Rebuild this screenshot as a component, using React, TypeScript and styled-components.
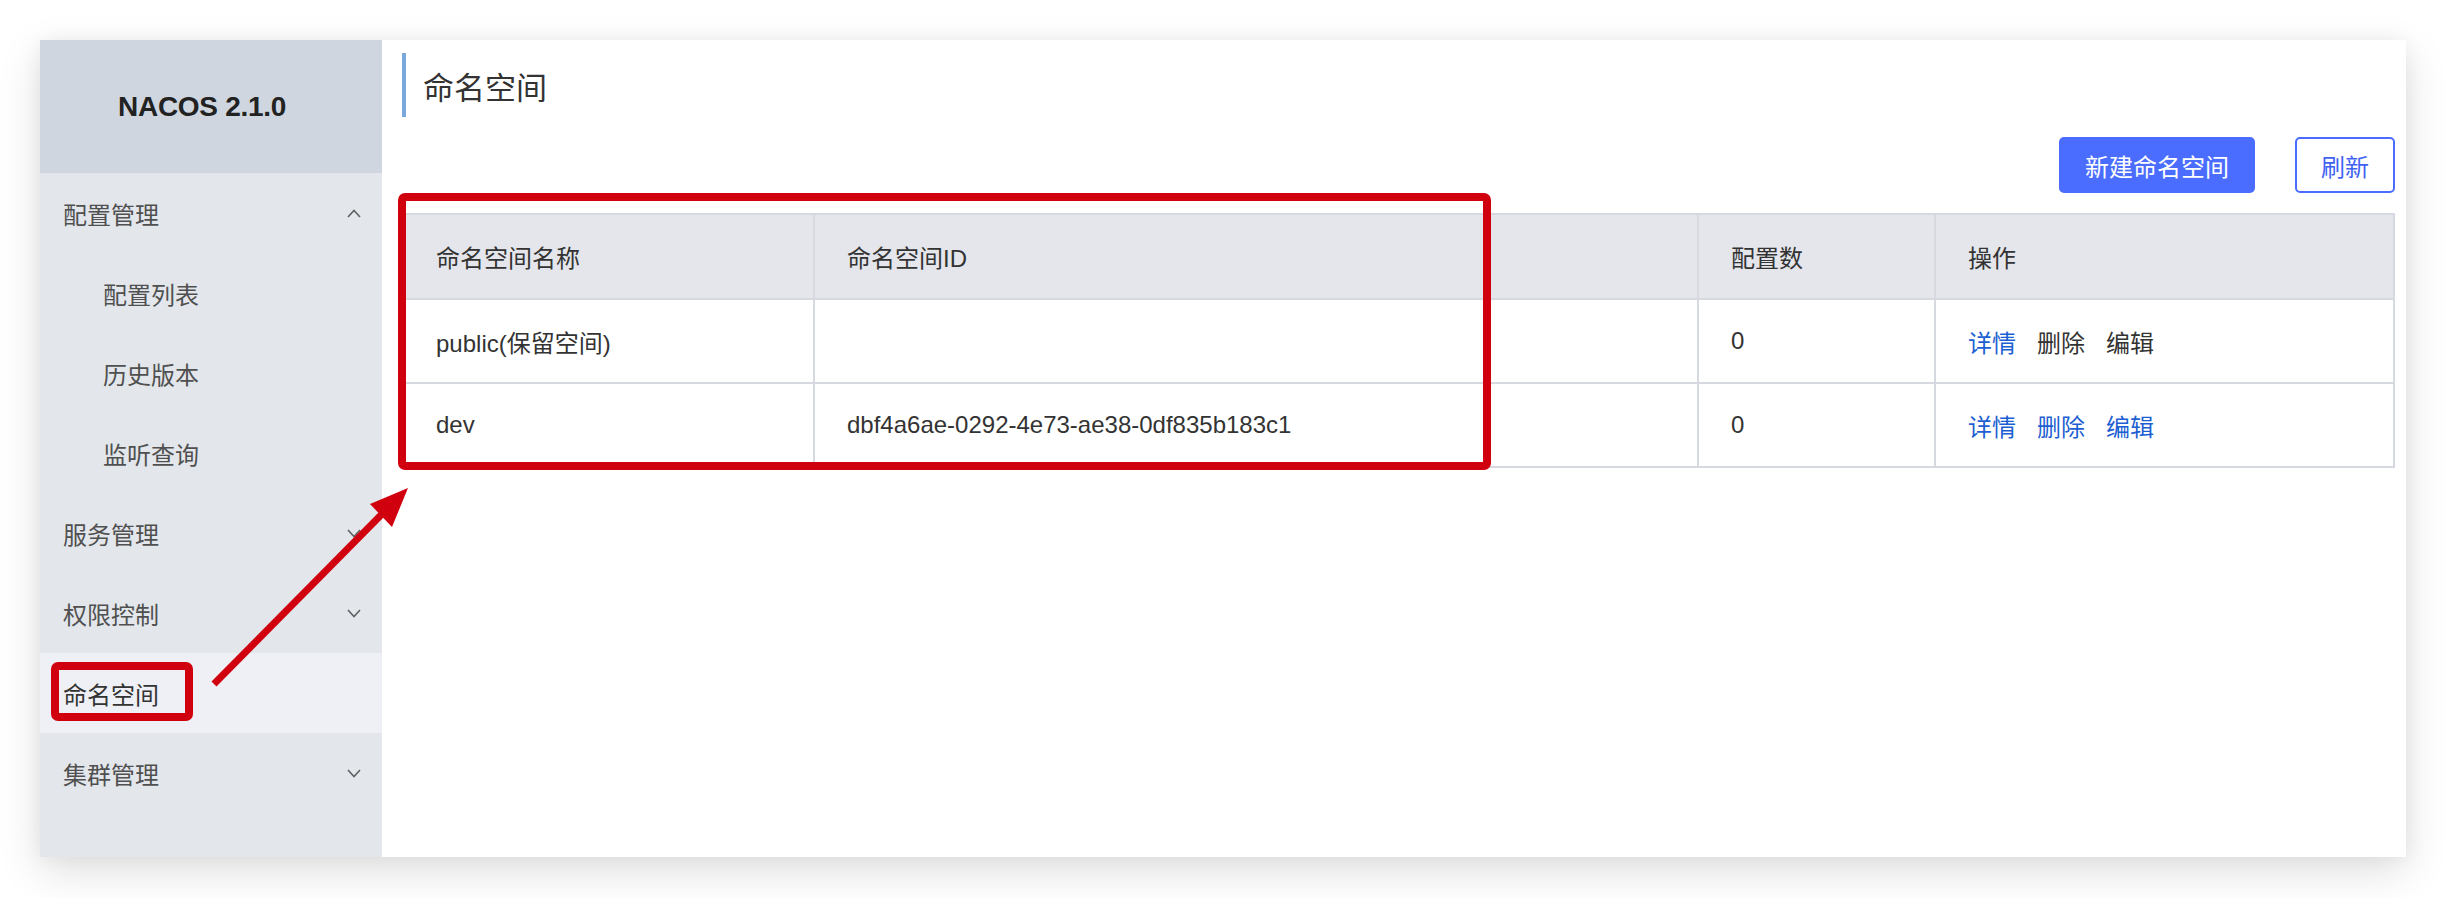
import styled, { createGlobalStyle } from "styled-components";

const GlobalStyle = createGlobalStyle`
  html, body {
    margin: 0;
    padding: 0;
    background: #ffffff;
  }
  body {
    font-family: "Liberation Sans", "Noto Sans CJK SC", sans-serif;
    color: #333;
  }
`;

interface MenuEntry {
  label: string;
  sub?: boolean;
  arrow?: "up" | "down";
  active?: boolean;
}

const menu: MenuEntry[] = [
  { label: "配置管理", arrow: "up" },
  { label: "配置列表", sub: true },
  { label: "历史版本", sub: true },
  { label: "监听查询", sub: true },
  { label: "服务管理", arrow: "down" },
  { label: "权限控制", arrow: "down" },
  { label: "命名空间", active: true },
  { label: "集群管理", arrow: "down" },
];

interface Row {
  name: string;
  id: string;
  count: number;
  locked: boolean;
}

const rows: Row[] = [
  { name: "public(保留空间)", id: "", count: 0, locked: true },
  { name: "dev", id: "dbf4a6ae-0292-4e73-ae38-0df835b183c1", count: 0, locked: false },
];

function Chevron({ dir }: { dir: "up" | "down" }) {
  const points = dir === "up" ? "1,8 7,1.5 13,8" : "1,1 7,7.5 13,1";
  return (
    <svg width="14" height="9" viewBox="0 0 14 9">
      <polyline points={points} fill="none" stroke="#606060" strokeWidth="1.6" />
    </svg>
  );
}

export default function App() {
  return (
    <>
      <GlobalStyle />
      <Page>
        <Window>
          <Sidebar>
            <Logo>NACOS 2.1.0</Logo>
            {menu.map((m, i) => (
              <MenuItem key={i} $sub={!!m.sub} $active={!!m.active}>
                <span>{m.label}</span>
                {m.arrow && <Chevron dir={m.arrow} />}
              </MenuItem>
            ))}
          </Sidebar>
          <Main>
            <Title>命名空间</Title>
            <Toolbar>
              <Button $primary>新建命名空间</Button>
              <Button>刷新</Button>
            </Toolbar>
            <Table>
              <colgroup>
                <col style={{ width: 411 }} />
                <col style={{ width: 884 }} />
                <col style={{ width: 237 }} />
                <col />
              </colgroup>
              <thead>
                <tr>
                  <th>命名空间名称</th>
                  <th>命名空间ID</th>
                  <th>配置数</th>
                  <th>操作</th>
                </tr>
              </thead>
              <tbody>
                {rows.map((r) => (
                  <tr key={r.name}>
                    <td>{r.name}</td>
                    <td>{r.id}</td>
                    <td>{r.count}</td>
                    <td>
                      <Actions>
                        <Action $enabled>详情</Action>
                        <Action $enabled={!r.locked}>删除</Action>
                        <Action $enabled={!r.locked}>编辑</Action>
                      </Actions>
                    </td>
                  </tr>
                ))}
              </tbody>
            </Table>
          </Main>
        </Window>
        <Annotations width="2446" height="898" viewBox="0 0 2446 898">
          <rect x="402" y="197" width="1085" height="269" rx="3" fill="none" stroke="#d1000e" strokeWidth="8" />
          <rect x="55" y="666" width="134" height="51" rx="3" fill="none" stroke="#d1000e" strokeWidth="8" />
          <line x1="214" y1="684" x2="384" y2="512" stroke="#d1000e" strokeWidth="7" />
          <polygon points="408,488 370,504 392,527" fill="#d1000e" />
        </Annotations>
      </Page>
    </>
  );
}

const Page = styled.div`
  position: relative;
  width: 2446px;
  height: 898px;
  padding: 40px 40px 0 40px;
  box-sizing: border-box;
  overflow: hidden;
`;

const Window = styled.div`
  display: flex;
  height: 817px;
  background: #fff;
  box-shadow: 0 14px 40px rgba(0, 0, 0, 0.13), 0 0 18px rgba(0, 0, 0, 0.05);
`;

const Sidebar = styled.div`
  width: 342px;
  flex-shrink: 0;
  background: #e3e7ec;
  display: flex;
  flex-direction: column;
`;

const Logo = styled.div`
  height: 133px;
  background: #cfd6df;
  display: flex;
  align-items: center;
  justify-content: center;
  padding-right: 18px;
  font-size: 28px;
  font-weight: bold;
  letter-spacing: -0.3px;
  color: #222;
`;

const MenuItem = styled.div<{ $sub: boolean; $active: boolean }>`
  height: 80px;
  display: flex;
  align-items: center;
  justify-content: space-between;
  padding-left: ${(p) => (p.$sub ? "63px" : "23px")};
  padding-right: 21px;
  font-size: 24px;
  color: ${(p) => (p.$active ? "#333" : "#505050")};
  background: ${(p) => (p.$active ? "#eef0f5" : "transparent")};

  svg {
    display: block;
  }
`;

const Main = styled.div`
  flex: 1;
  padding: 13px 11px 0 20px;
  display: flex;
  flex-direction: column;
`;

const Title = styled.h1`
  margin: 0;
  height: 64px;
  display: flex;
  align-items: center;
  border-left: 4px solid #7aa8dd;
  padding-left: 17px;
  font-size: 31px;
  font-weight: normal;
  color: #333;
`;

const Toolbar = styled.div`
  display: flex;
  justify-content: flex-end;
  gap: 40px;
  margin-top: 20px;
`;

const Button = styled.button<{ $primary?: boolean }>`
  height: 56px;
  padding: 0 24px;
  font-family: inherit;
  font-size: 24px;
  border-radius: 5px;
  border: 2px solid #4a6dff;
  background: ${(p) => (p.$primary ? "#4a6dff" : "#fff")};
  color: ${(p) => (p.$primary ? "#fff" : "#3f62f2")};
`;

const Table = styled.table`
  margin-top: 20px;
  width: 100%;
  table-layout: fixed;
  border-collapse: collapse;
  font-size: 24px;
  color: #333;

  th,
  td {
    border: 2px solid #d6d9df;
    padding: 0 32px;
    text-align: left;
    white-space: nowrap;
  }

  th {
    height: 83px;
    background: #e4e6eb;
    font-weight: normal;
  }

  td {
    height: 82px;
  }
`;

const Actions = styled.div`
  display: flex;
  gap: 21px;
`;

const Action = styled.span<{ $enabled: boolean }>`
  color: ${(p) => (p.$enabled ? "#1d5fd2" : "#333")};
`;

const Annotations = styled.svg`
  position: absolute;
  top: 0;
  left: 0;
  pointer-events: none;
`;
